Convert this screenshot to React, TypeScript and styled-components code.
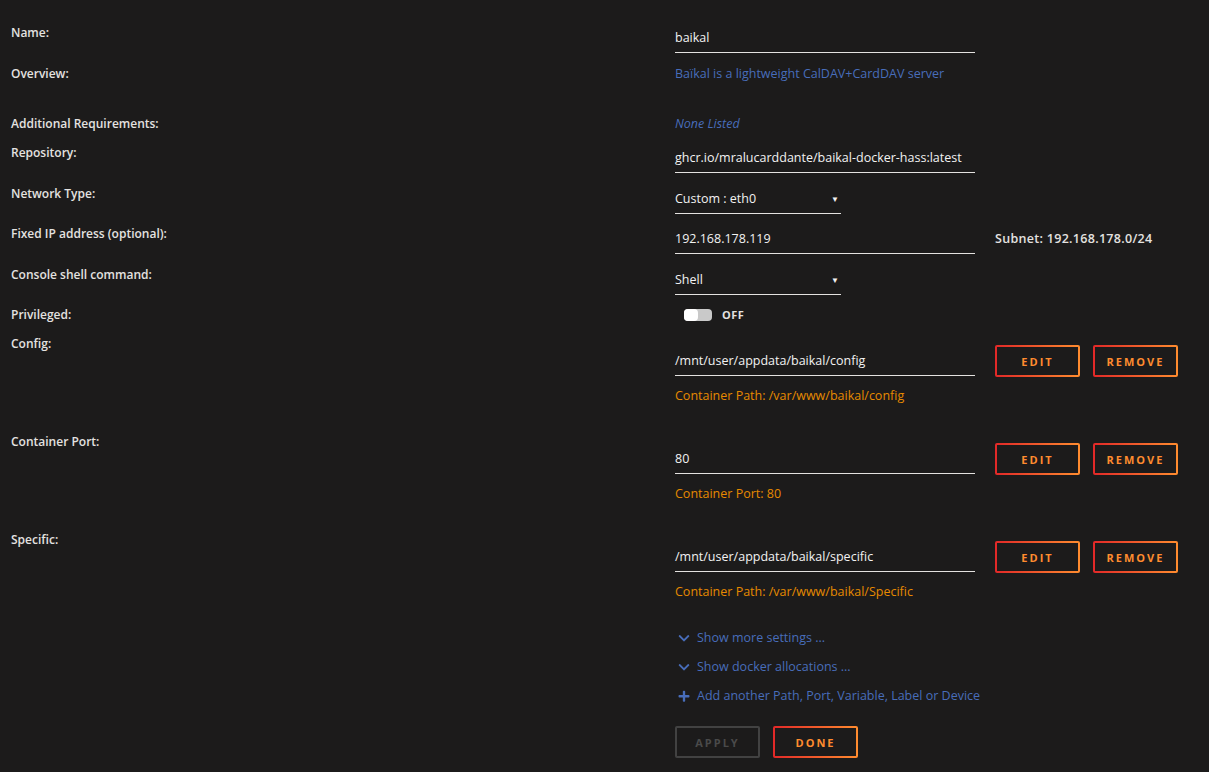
import React from "react";
import styled, { createGlobalStyle } from "styled-components";
import { FaChevronDown, FaPlus } from "react-icons/fa";

const GlobalStyle = createGlobalStyle`
  html, body {
    margin: 0;
    padding: 0;
    background: #1c1b1b;
  }
  body {
    font-family: "Open Sans", "Noto Sans", "Liberation Sans", sans-serif;
    font-size: 12px;
    color: #e4e2e0;
  }
`;

const Page = styled.div`
  min-height: 772px;
  padding: 25px 0 0 11px;
  box-sizing: border-box;
`;

const Row = styled.div<{ $h: number }>`
  display: flex;
  align-items: flex-start;
  min-height: ${(p) => p.$h}px;
`;

const Label = styled.div`
  width: 664px;
  flex: none;
  line-height: 16px;
  font-weight: 600;
  font-size: 12px;
  color: #e4e2e0;
`;

const Value = styled.div`
  display: flex;
  flex-direction: column;
  line-height: 16px;
`;

const Info = styled.div<{ $italic?: boolean }>`
  color: #486dba;
  font-size: 12.5px;
  font-style: ${(p) => (p.$italic ? "italic" : "normal")};
  line-height: 16px;
`;

const Input = styled.div<{ $w: number; $top?: number }>`
  width: ${(p) => p.$w}px;
  margin-top: ${(p) => p.$top ?? 0}px;
  box-sizing: border-box;
  padding: 5px 0 6px;
  line-height: 16px;
  font-size: 12.5px;
  border-bottom: 1px solid #e4e2e0;
  color: #f2f2f2;
  font-weight: 500;
  white-space: nowrap;
`;

const Select = styled(Input)`
  display: flex;
  justify-content: space-between;
  align-items: center;
  padding-right: 2px;
`;

const Caret = styled.span`
  font-size: 8px;
  color: #f2f2f2;
`;

const Inline = styled.div`
  display: flex;
  align-items: flex-start;
`;

const Aside = styled.div`
  padding: 5px 0 0 20px;
  line-height: 16px;
  font-size: 12.5px;
  font-weight: 600;
  letter-spacing: 0.3px;
`;

const Toggle = styled.div`
  display: flex;
  align-items: center;
  gap: 10px;
  padding-left: 9px;
  font-size: 11px;
  font-weight: 700;
  letter-spacing: 0.5px;
  color: #e4e2e0;
`;

const Track = styled.div`
  position: relative;
  width: 28px;
  height: 12px;
  border-radius: 4px;
  background: #c9c9c9;
`;

const Knob = styled.div`
  position: absolute;
  left: 0;
  top: 0;
  width: 14px;
  height: 12px;
  border-radius: 4px;
  background: #ffffff;
`;

const MountRow = styled.div`
  display: flex;
  align-items: flex-start;
  padding-top: 2px;
`;

const Buttons = styled.div`
  display: flex;
  gap: 13px;
  margin-left: 20px;
  margin-top: 7px;
`;

const Button = styled.button<{ $disabled?: boolean }>`
  width: 85px;
  height: 32px;
  box-sizing: border-box;
  border: 2px solid transparent;
  border-radius: 2px;
  background: ${(p) =>
    p.$disabled
      ? "linear-gradient(#1c1b1b, #1c1b1b) padding-box, linear-gradient(#424242, #424242) border-box"
      : "linear-gradient(#1c1b1b, #1c1b1b) padding-box, linear-gradient(90deg, #e22828, #ff8c2f) border-box"};
  color: ${(p) => (p.$disabled ? "#4a4a4a" : "#ff8c2f")};
  font-family: "Open Sans", "Noto Sans", "Liberation Sans", sans-serif;
  font-size: 11px;
  font-weight: 700;
  letter-spacing: 2px;
  text-transform: uppercase;
  padding: 0;
  cursor: pointer;
`;

const Note = styled.div`
  color: #e68a00;
  font-size: 12.5px;
  margin-top: 11px;
  line-height: 16px;
`;

const Links = styled.div`
  display: flex;
  flex-direction: column;
  gap: 13px;
  margin-top: 0px;
  padding-left: 664px;
`;

const Link = styled.div`
  display: flex;
  align-items: center;
  gap: 7px;
  color: #486dba;
  font-size: 12.5px;
  line-height: 16px;
  svg {
    width: 12px;
    margin-left: 3px;
  }
`;

const Actions = styled.div`
  display: flex;
  gap: 13px;
  margin-top: 22px;
  padding-left: 664px;
`;

const mounts = [
  {
    label: "Config:",
    value: "/mnt/user/appdata/baikal/config",
    note: "Container Path: /var/www/baikal/config",
  },
  { label: "Container Port:", value: "80", note: "Container Port: 80" },
  {
    label: "Specific:",
    value: "/mnt/user/appdata/baikal/specific",
    note: "Container Path: /var/www/baikal/Specific",
  },
];

export default function App() {
  return (
    <>
      <GlobalStyle />
      <Page>
        <Row $h={41}>
          <Label>Name:</Label>
          <Value>
            <Input $w={300}>baikal</Input>
          </Value>
        </Row>
        <Row $h={50}>
          <Label>Overview:</Label>
          <Info>Baïkal is a lightweight CalDAV+CardDAV server</Info>
        </Row>
        <Row $h={29}>
          <Label>Additional Requirements:</Label>
          <Info $italic>None Listed</Info>
        </Row>
        <Row $h={41}>
          <Label>Repository:</Label>
          <Input $w={300}>ghcr.io/mralucarddante/baikal-docker-hass:latest</Input>
        </Row>
        <Row $h={40}>
          <Label>Network Type:</Label>
          <Select $w={166}>
            Custom : eth0 <Caret>▼</Caret>
          </Select>
        </Row>
        <Row $h={41}>
          <Label>Fixed IP address (optional):</Label>
          <Inline>
            <Input $w={300}>192.168.178.119</Input>
            <Aside>Subnet: 192.168.178.0/24</Aside>
          </Inline>
        </Row>
        <Row $h={40}>
          <Label>Console shell command:</Label>
          <Select $w={166}>
            Shell <Caret>▼</Caret>
          </Select>
        </Row>
        <Row $h={29}>
          <Label>Privileged:</Label>
          <Toggle>
            <Track>
              <Knob />
            </Track>
            OFF
          </Toggle>
        </Row>
        {mounts.map((m) => (
          <Row $h={98} key={m.label}>
            <Label>{m.label}</Label>
            <Value>
              <MountRow>
                <Input $w={300} $top={10}>
                  {m.value}
                </Input>
                <Buttons>
                  <Button>Edit</Button>
                  <Button>Remove</Button>
                </Buttons>
              </MountRow>
              <Note>{m.note}</Note>
            </Value>
          </Row>
        ))}
        <Links>
          <Link>
            <FaChevronDown /> Show more settings ...
          </Link>
          <Link>
            <FaChevronDown /> Show docker allocations ...
          </Link>
          <Link>
            <FaPlus /> Add another Path, Port, Variable, Label or Device
          </Link>
        </Links>
        <Actions>
          <Button $disabled>Apply</Button>
          <Button>Done</Button>
        </Actions>
      </Page>
    </>
  );
}
